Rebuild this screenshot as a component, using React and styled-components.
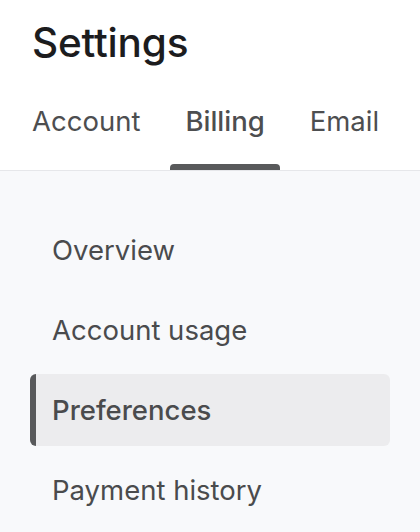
import React from "react";
import styled, { createGlobalStyle } from "styled-components";

const Global = createGlobalStyle`
  html, body { margin: 0; padding: 0; background: #ffffff; }
  body { font-family: Inter, "Noto Sans", sans-serif; -webkit-font-smoothing: antialiased; }
  #root { width: 420px; min-height: 532px; background: #f8f9fb; }
`;

const Page = styled.div`
  display: flex;
  flex-direction: column;
  width: 420px;
  min-height: 532px;
`;

const Header = styled.header`
  background: #ffffff;
  border-bottom: 1px solid #e6e7ea;
`;

const Title = styled.h1`
  margin: 0;
  padding: 18px 0 0 32px;
  font-size: 40.5px;
  line-height: 50px;
  font-weight: 500;
  color: #1c1c1e;
  letter-spacing: -0.2px;
`;

const Tabs = styled.nav`
  display: flex;
  gap: 15px;
  padding: 0 0 0 17px;
  margin-top: 33px;
`;

const Tab = styled.div`
  position: relative;
  padding: 0 15px;
  height: 69px;
  font-size: 27.5px;
  line-height: 40px;
  font-weight: ${(p) => (p.$active ? 500 : 400)};
  color: #4d4e50;
  &::after {
    content: "";
    display: ${(p) => (p.$active ? "block" : "none")};
    position: absolute;
    left: 0;
    right: 0;
    bottom: 0;
    height: 6px;
    border-radius: 4px 4px 0 0;
    background: #58595b;
  }
`;

const Content = styled.main`
  flex: 1;
  background: #f8f9fb;
  padding: 43px 30px 0 30px;
  display: flex;
  flex-direction: column;
  gap: 8px;
`;

const Item = styled.div`
  height: 72px;
  display: flex;
  align-items: center;
  box-sizing: border-box;
  padding-left: ${(p) => (p.$active ? "16px" : "22px")};
  border-left: ${(p) => (p.$active ? "6px solid #58595b" : "none")};
  border-radius: 6px;
  background: ${(p) => (p.$active ? "#ececee" : "transparent")};
  font-size: 27.5px;
  color: #4a4b4d;
  font-weight: ${(p) => (p.$active ? 500 : 400)};
`;

const tabs = ["Account", "Billing", "Email"];
const items = ["Overview", "Account usage", "Preferences", "Payment history"];

export default function App() {
  return (
    <Page>
      <Global />
      <Header>
        <Title>Settings</Title>
        <Tabs>
          {tabs.map((t) => (
            <Tab key={t} $active={t === "Billing"}>
              {t}
            </Tab>
          ))}
        </Tabs>
      </Header>
      <Content>
        {items.map((i) => (
          <Item key={i} $active={i === "Preferences"}>
            {i}
          </Item>
        ))}
      </Content>
    </Page>
  );
}
